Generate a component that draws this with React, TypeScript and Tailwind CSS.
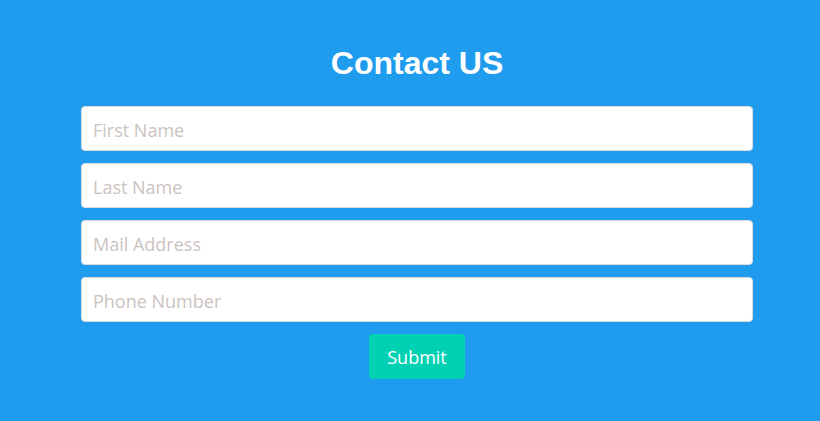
export default function App() {
  const fields = ["First Name", "Last Name", "Mail Address", "Phone Number"];
  return (
    <div className="w-[820px] h-[421px] bg-[#209cee] pl-[81px] pt-[45px]">
      <div className="w-[672px] flex flex-col items-center">
        <h1 className="text-[32px] leading-[37px] font-bold text-white font-['Liberation_Sans',Arial,sans-serif]">
          Contact US
        </h1>
        <div className="mt-[24px] w-full flex flex-col gap-[12px]">
          {fields.map((f) => (
            <input
              key={f}
              placeholder={f}
              className="w-full h-[45px] bg-white rounded-[4px] border border-[#dbdbdb] px-[11px] pt-[2px] text-[18px] font-['Open_Sans',sans-serif] text-[#363636] placeholder:text-[#cbc3c0] outline-none"
            />
          ))}
        </div>
        <button className="mt-[12px] h-[45px] w-[96px] pt-[1px] rounded-[4px] bg-[#00d1b2] text-white text-[18px] font-['Open_Sans',sans-serif]">
          Submit
        </button>
      </div>
    </div>
  );
}
